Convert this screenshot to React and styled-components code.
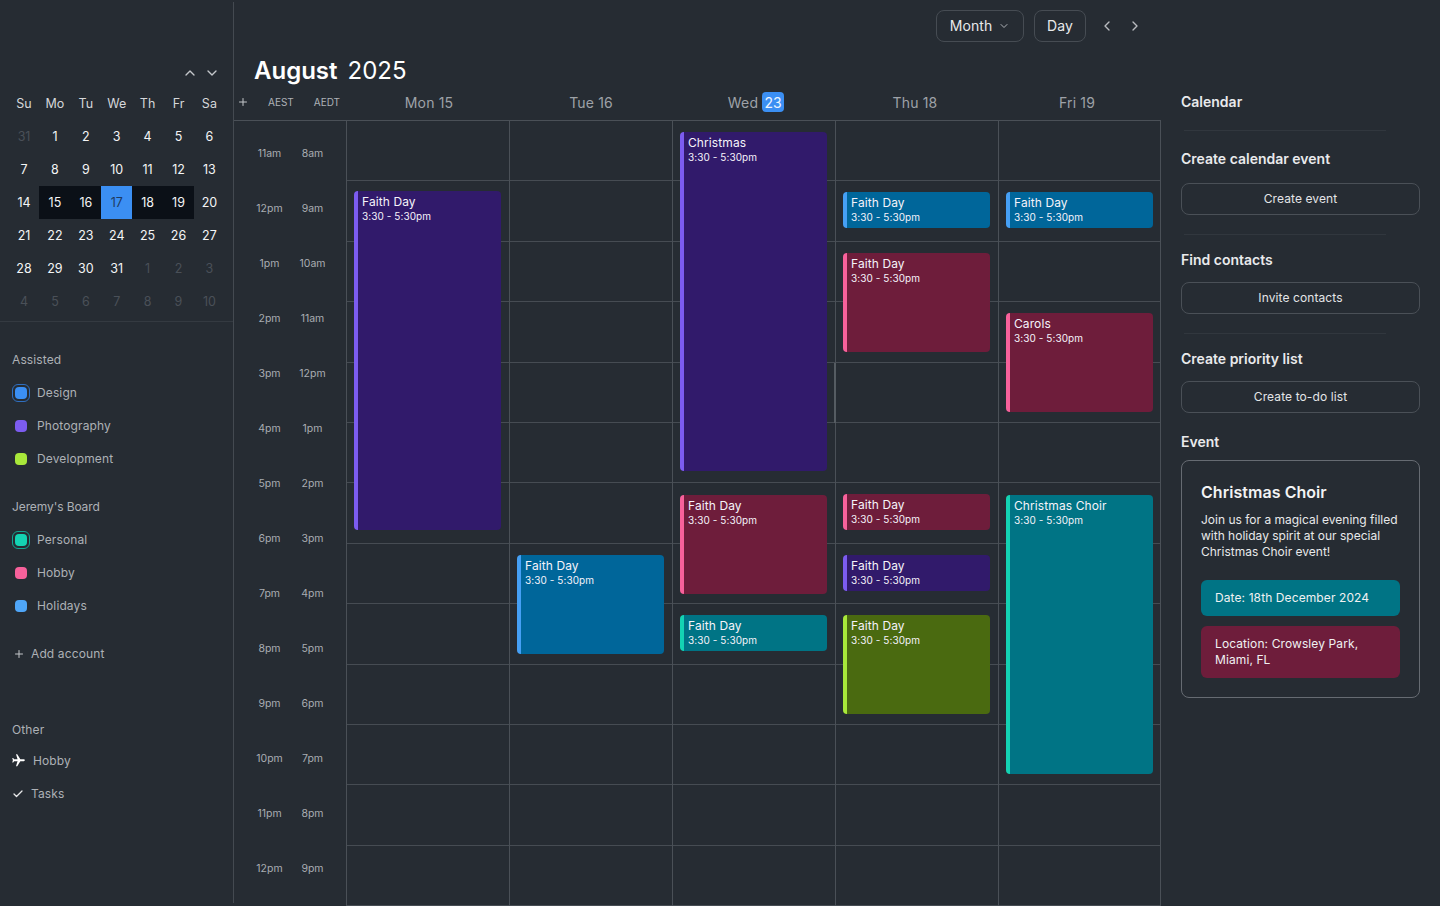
import React from "react";
import styled, { createGlobalStyle } from "styled-components";
import { ChevronUp, ChevronDown, ChevronLeft, ChevronRight, Plus, Check } from "lucide-react";

const Global = createGlobalStyle`
  html, body { margin: 0; padding: 0; background: #262c33; }
  * { box-sizing: border-box; }
  body { font-family: Inter, "Liberation Sans", sans-serif; color: #fff; overflow: hidden; }
`;

const Shell = styled.div`
  display: flex;
  width: 1440px;
  height: 906px;
  overflow: hidden;
  background: #262c33;
`;

/* ---------- left sidebar ---------- */
const Sidebar = styled.aside`
  width: 234px;
  flex: none;
  height: 901px;
  margin-top: 2px;
  padding-top: 63px;
  border-right: 1px solid #444a51;
`;
const MonthNav = styled.div`
  display: flex;
  justify-content: flex-end;
  gap: 6px;
  height: 16px;
  padding-right: 13px;
  margin-bottom: 6px;
  color: #c4c7cb;
`;
const MiniGrid = styled.div`
  display: grid;
  grid-template-columns: repeat(7, 30.9px);
  grid-auto-rows: 33px;
  padding-left: 8.6px;
`;
const MiniCell = styled.div`
  display: flex;
  align-items: center;
  justify-content: center;
  font-size: 12.5px;
  color: ${(p) => (p.$muted ? "#4a5058" : p.$head ? "#d5d7da" : "#f4f5f6")};
  background: ${(p) => (p.$today ? "#3b8ff3" : p.$range ? "#0b1017" : "transparent")};
  ${(p) => p.$today && "color: #1f3a5f;"}
`;
const SideRule = styled.div`
  height: 1px;
  margin-top: 3px;
  background: #343a41;
`;
const SideLabel = styled.div`
  height: 20px;
  padding-left: 12px;
  margin-top: ${(p) => p.$top}px;
  margin-bottom: ${(p) => p.$bottom}px;
  font-size: 12px;
  letter-spacing: ${(p) => p.$track ?? 0.12}px;
  line-height: 20px;
  color: #adb1b6;
`;
const SideRow = styled.div`
  display: flex;
  align-items: center;
  height: 33px;
  padding-left: ${(p) => p.$left ?? 12}px;
  gap: ${(p) => p.$gap ?? 7}px;
  margin-top: ${(p) => p.$top ?? 0}px;
  font-size: 12px;
  letter-spacing: 0.12px;
  color: #adb1b6;
`;
const DotBox = styled.span`
  width: 18px;
  height: 18px;
  flex: none;
  display: flex;
  align-items: center;
  justify-content: center;
  border-radius: 6px;
  border: 1px solid ${(p) => (p.$ring ? p.$ring : "transparent")};
`;
const Dot = styled.span`
  width: 12px;
  height: 12px;
  border-radius: 4px;
  background: ${(p) => p.$color};
`;
const PlaneIcon = styled.svg`
  width: 15px;
  height: 15px;
  flex: none;
  margin-left: -1px;
  fill: #fff;
  transform: rotate(90deg);
`;

/* ---------- main calendar ---------- */
const Main = styled.main`
  width: 927px;
  flex: none;
  display: flex;
  flex-direction: column;
`;
const TopBar = styled.div`
  display: flex;
  align-items: center;
  justify-content: flex-end;
  height: 52px;
  padding: 0 18px 0 0;
  color: #c4c7cb;
`;
const Pill = styled.div`
  display: flex;
  align-items: center;
  justify-content: center;
  gap: 6px;
  width: ${(p) => p.$w}px;
  height: 32px;
  margin-right: ${(p) => p.$mr}px;
  padding-bottom: 1px;
  border: 1px solid #464c53;
  border-radius: 8px;
  font-size: 14px;
  letter-spacing: 0.1px;
  color: #e8e9ea;
`;
const Arrow = styled.span`
  display: flex;
  width: 16px;
  justify-content: center;
  margin-left: ${(p) => p.$ml ?? 0}px;
  color: #b9bcc0;
`;
const Title = styled.h1`
  display: flex;
  gap: 10px;
  height: 36px;
  margin: 0;
  padding: 1px 0 0 20px;
  font-size: 24px;
  line-height: 36px;
  font-weight: 600;
  color: #fff;
`;
const YearText = styled.span`
  font-weight: 400;
`;
const HeadRow = styled.div`
  display: grid;
  grid-template-columns: 114px repeat(5, 162px);
  height: 33px;
  border-bottom: 1px solid #4a5057;
`;
const ZoneCell = styled.div`
  display: flex;
  align-items: center;
  height: 28px;
  padding-left: 3px;
  color: #c4c7cb;
`;
const ZoneName = styled.span`
  font-size: 10px;
  color: #aeb2b7;
  margin-left: ${(p) => p.$ml}px;
`;
const DayName = styled.div`
  display: flex;
  align-items: center;
  justify-content: center;
  gap: 4px;
  height: 28px;
  padding-left: ${(p) => (p.$shift ? 6 : 0)}px;
  font-size: 14px;
  letter-spacing: 0.15px;
  color: #9ea2a8;
`;
const DayBadge = styled.span`
  display: inline-flex;
  align-items: center;
  justify-content: center;
  width: 22px;
  height: 20px;
  border-radius: 4px;
  background: #3b8ff3;
  color: #eef5ff;
`;
const Body = styled.div`
  flex: 1;
  display: grid;
  grid-template-columns: 112px repeat(5, 163px);
  min-height: 0;
`;
const Gutter = styled.div`
  display: grid;
  grid-template-columns: 1fr 1fr;
  grid-auto-rows: 55px;
  padding: 5px 12px 0 14px;
`;
const TimeLabel = styled.div`
  display: flex;
  align-items: center;
  justify-content: center;
  font-size: 10.5px;
  color: #a9adb2;
`;
const DayCol = styled.div`
  position: relative;
  border-left: 1px solid #4a5057;
  ${(p) => p.$last && "border-right: 1px solid #4a5057;"}
`;
const HourCell = styled.div`
  height: 60.42px;
  border-bottom: 1px solid #464c53;
  ${(p) => p.$marked && "box-shadow: -2px 0 0 #555c62;"}
`;
const Event = styled.div`
  position: absolute;
  left: 7px;
  width: 147px;
  padding: 3px 4px 0 4px;
  border-left: 4px solid ${(p) => p.$edge};
  border-radius: 4px;
  background: ${(p) => p.$bg};
  overflow: hidden;
`;
const EventTitle = styled.div`
  font-size: 12px;
  letter-spacing: 0.1px;
  line-height: 15px;
  color: #f5f3fa;
`;
const EventTime = styled.div`
  font-size: 10px;
  letter-spacing: 0.08px;
  line-height: 15px;
  color: #f5f3fa;
`;

/* ---------- right panel ---------- */
const Aside = styled.aside`
  width: 279px;
  flex: none;
  padding: 92px 20px 0 20px;
`;
const PanelHead = styled.h2`
  margin: ${(p) => p.$top ?? 0}px 0 ${(p) => p.$bottom ?? 0}px;
  font-size: 14px;
  line-height: 20px;
  font-weight: 600;
  color: #e9eaec;
`;
const PanelRule = styled.div`
  width: 202px;
  height: 1px;
  margin: ${(p) => p.$top}px 0 ${(p) => p.$bottom}px 3px;
  background: #31373e;
`;
const ActionButton = styled.div`
  display: flex;
  align-items: center;
  justify-content: center;
  height: 32px;
  padding-bottom: 2px;
  border: 1px solid #4a5057;
  border-radius: 8px;
  font-size: 12px;
  letter-spacing: 0.1px;
  color: #e4e5e7;
`;
const EventCard = styled.section`
  height: 238px;
  margin-top: 8px;
  padding: 19px 19px;
  border: 1px solid #666b72;
  border-radius: 8px;
`;
const CardTitle = styled.h3`
  margin: 0 0 8px;
  font-size: 16px;
  letter-spacing: 0.05px;
  line-height: 24px;
  font-weight: 600;
  color: #f2f3f4;
`;
const CardText = styled.p`
  margin: 0 0 20px;
  font-size: 12px;
  line-height: 16px;
  color: #e8e9ea;
`;
const InfoBox = styled.div`
  margin-bottom: 10px;
  padding: 10px 14px;
  border-radius: 6px;
  background: ${(p) => p.$bg};
  font-size: 12px;
  letter-spacing: 0.1px;
  line-height: 16px;
  color: #f0f1f2;
`;

const tones = {
  purple: { bg: "#311a6b", edge: "#7c5cf0" },
  blue: { bg: "#00669a", edge: "#46a0f5" },
  pink: { bg: "#6e1d3b", edge: "#f7619b" },
  teal: { bg: "#007485", edge: "#14d3b3" },
  green: { bg: "#4a6a10", edge: "#a8e83a" },
};

const weekdays = ["Su", "Mo", "Tu", "We", "Th", "Fr", "Sa"];
const miniDays = [
  31, 1, 2, 3, 4, 5, 6, 7, 8, 9, 10, 11, 12, 13, 14, 15, 16, 17, 18, 19, 20, 21, 22, 23, 24, 25, 26, 27,
  28, 29, 30, 31, 1, 2, 3, 4, 5, 6, 7, 8, 9, 10,
];
const times = [
  ["11am", "8am"], ["12pm", "9am"], ["1pm", "10am"], ["2pm", "11am"], ["3pm", "12pm"], ["4pm", "1pm"],
  ["5pm", "2pm"], ["6pm", "3pm"], ["7pm", "4pm"], ["8pm", "5pm"], ["9pm", "6pm"], ["10pm", "7pm"],
  ["11pm", "8pm"], ["12pm", "9pm"],
];
const days = [
  { label: "Mon 15", events: [{ t: "Faith Day", tone: "purple", y: 191, b: 530 }] },
  { label: "Tue 16", events: [{ t: "Faith Day", tone: "blue", y: 555, b: 654 }] },
  {
    label: "Wed",
    badge: "23",
    events: [
      { t: "Christmas", tone: "purple", y: 132, b: 471 },
      { t: "Faith Day", tone: "pink", y: 495, b: 594 },
      { t: "Faith Day", tone: "teal", y: 615, b: 651 },
    ],
  },
  {
    label: "Thu 18",
    marked: 4,
    events: [
      { t: "Faith Day", tone: "blue", y: 192, b: 228 },
      { t: "Faith Day", tone: "pink", y: 253, b: 352 },
      { t: "Faith Day", tone: "pink", y: 494, b: 530 },
      { t: "Faith Day", tone: "purple", y: 555, b: 591 },
      { t: "Faith Day", tone: "green", y: 615, b: 714 },
    ],
  },
  {
    label: "Fri 19",
    events: [
      { t: "Faith Day", tone: "blue", y: 192, b: 228 },
      { t: "Carols", tone: "pink", y: 313, b: 412 },
      { t: "Christmas Choir", tone: "teal", y: 495, b: 774 },
    ],
  },
];

const Legend = ({ color, ring, children }) => (
  <SideRow $left={12} $gap={7}>
    <DotBox $ring={ring}>
      <Dot $color={color} />
    </DotBox>
    {children}
  </SideRow>
);

export default function App() {
  return (
    <Shell>
      <Global />
      <Sidebar>
        <MonthNav>
          <ChevronUp size={16} />
          <ChevronDown size={16} />
        </MonthNav>
        <MiniGrid>
          {weekdays.map((d) => (
            <MiniCell key={d} $head>{d}</MiniCell>
          ))}
          {miniDays.map((d, i) => (
            <MiniCell
              key={i}
              $muted={i === 0 || i >= 32}
              $range={i >= 15 && i <= 19}
              $today={i === 17}
            >
              {d}
            </MiniCell>
          ))}
        </MiniGrid>
        <SideRule />
        <SideLabel $top={28} $bottom={6}>Assisted</SideLabel>
        <Legend color="#3b8ff3" ring="#2f6fc0">Design</Legend>
        <Legend color="#7c5cf0">Photography</Legend>
        <Legend color="#a8e83a">Development</Legend>
        <SideLabel $top={22} $bottom={6} $track={-0.1}>Jeremy's Board</SideLabel>
        <Legend color="#14d3b3" ring="#12a592">Personal</Legend>
        <Legend color="#f7619b">Hobby</Legend>
        <Legend color="#4fa6f8">Holidays</Legend>
        <SideRow $top={15} $left={13} $gap={6}>
          <Plus size={12} color="#c4c7cb" />
          Add account
        </SideRow>
        <SideLabel $top={50} $bottom={4}>Other</SideLabel>
        <SideRow $left={12} $gap={7}>
          <PlaneIcon viewBox="0 0 24 24">
            <path d="M21 16v-2l-8-5V3.5c0-.83-.67-1.5-1.5-1.5S10 2.67 10 3.5V9l-8 5v2l8-2.5V19l-2 1.5V22l3.5-1 3.5 1v-1.5L13 19v-5.5l8 2.5z" />
          </PlaneIcon>
          Hobby
        </SideRow>
        <SideRow $left={12} $gap={7}>
          <Check size={12} color="#e8e9ea" strokeWidth={2.5} />
          Tasks
        </SideRow>
      </Sidebar>

      <Main>
        <TopBar>
          <Pill $w={88} $mr={10}>
            Month <ChevronDown size={12} color="#aeb2b7" />
          </Pill>
          <Pill $w={52} $mr={13}>Day</Pill>
          <Arrow><ChevronLeft size={16} /></Arrow>
          <Arrow $ml={12}><ChevronRight size={16} /></Arrow>
        </TopBar>
        <Title>
          August <YearText>2025</YearText>
        </Title>
        <HeadRow>
          <ZoneCell>
            <Plus size={12} />
            <ZoneName $ml={19}>AEST</ZoneName>
            <ZoneName $ml={20}>AEDT</ZoneName>
          </ZoneCell>
          {days.map((d) => (
            <DayName key={d.label} $shift={!!d.badge}>
              {d.label}
              {d.badge && <DayBadge>{d.badge}</DayBadge>}
            </DayName>
          ))}
        </HeadRow>
        <Body>
          <Gutter>
            {times.map(([a, b], i) => (
              <React.Fragment key={i}>
                <TimeLabel>{a}</TimeLabel>
                <TimeLabel>{b}</TimeLabel>
              </React.Fragment>
            ))}
          </Gutter>
          {days.map((d, di) => (
            <DayCol key={d.label} $last={di === 4}>
              {times.slice(0, 13).map((_, i) => (
                <HourCell key={i} $marked={d.marked === i} />
              ))}
              {d.events.map((e, i) => (
                <Event
                  key={i}
                  $bg={tones[e.tone].bg}
                  $edge={tones[e.tone].edge}
                  style={{ top: e.y - 121, height: e.b - e.y }}
                >
                  <EventTitle>{e.t}</EventTitle>
                  <EventTime>3:30 - 5:30pm</EventTime>
                </Event>
              ))}
            </DayCol>
          ))}
        </Body>
      </Main>

      <Aside>
        <PanelHead>Calendar</PanelHead>
        <PanelRule $top={18} $bottom={18} />
        <PanelHead $bottom={14}>Create calendar event</PanelHead>
        <ActionButton>Create event</ActionButton>
        <PanelRule $top={19} $bottom={15} />
        <PanelHead $bottom={12}>Find contacts</PanelHead>
        <ActionButton>Invite contacts</ActionButton>
        <PanelRule $top={19} $bottom={15} />
        <PanelHead $bottom={12}>Create priority list</PanelHead>
        <ActionButton>Create to-do list</ActionButton>
        <PanelHead $top={19}>Event</PanelHead>
        <EventCard>
          <CardTitle>Christmas Choir</CardTitle>
          <CardText>
            Join us for a magical evening filled with holiday spirit at our special Christmas Choir event!
          </CardText>
          <InfoBox $bg={tones.teal.bg}>Date: 18th December 2024</InfoBox>
          <InfoBox $bg={tones.pink.bg}>Location: Crowsley Park, Miami, FL</InfoBox>
        </EventCard>
      </Aside>
    </Shell>
  );
}
